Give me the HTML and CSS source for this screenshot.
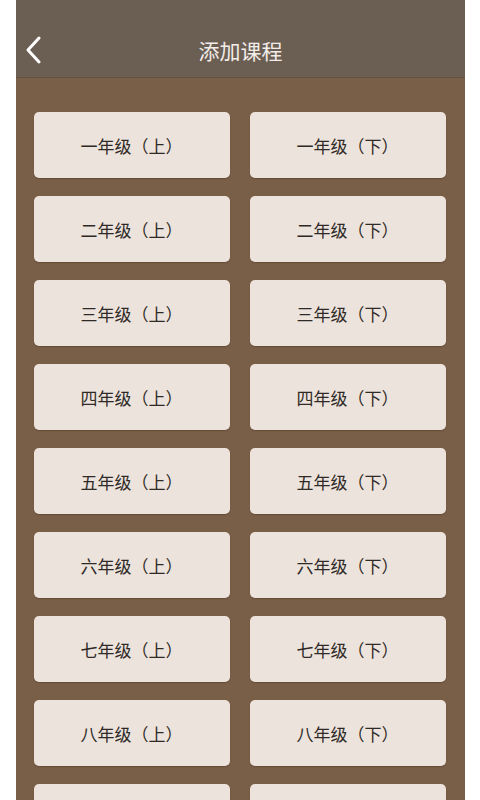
FILE: index.html
```html
<!DOCTYPE html>
<html lang="zh">
<head>
<meta charset="utf-8">
<title>添加课程</title>
<link rel="stylesheet" href="styles.css">
</head>
<body>
<div class="app">
  <header class="topbar">
    <svg class="back" width="20" height="28" viewBox="0 0 20 28"><path d="M15 2 L4 14 L15 26" fill="none" stroke="#fff" stroke-width="3" stroke-linecap="round" stroke-linejoin="round"/></svg>
    <h1 class="title">添加课程</h1>
  </header>
  <main class="grid">
    <div class="card">一年级（上）</div><div class="card">一年级（下）</div>
    <div class="card">二年级（上）</div><div class="card">二年级（下）</div>
    <div class="card">三年级（上）</div><div class="card">三年级（下）</div>
    <div class="card">四年级（上）</div><div class="card">四年级（下）</div>
    <div class="card">五年级（上）</div><div class="card">五年级（下）</div>
    <div class="card">六年级（上）</div><div class="card">六年级（下）</div>
    <div class="card">七年级（上）</div><div class="card">七年级（下）</div>
    <div class="card">八年级（上）</div><div class="card">八年级（下）</div>
    <div class="card"></div><div class="card"></div>
  </main>
</div>
</body>
</html>
```
FILE: styles.css
```css
html, body {
  margin: 0;
  padding: 0;
  height: 800px;
  overflow: hidden;
  background: #ffffff;
  font-family: "Noto Sans CJK SC", "Noto Sans", sans-serif;
}
.app {
  margin-left: 16px;
  width: 449px;
  height: 800px;
  background: #7a5f48;
  overflow: hidden;
}
.topbar {
  position: relative;
  height: 77px;
  box-sizing: border-box;
  padding-top: 22px;
  background: #6b5e53;
  display: flex;
  align-items: center;
  justify-content: center;
  box-shadow: 0 1px 0 #66523f;
}
.back {
  position: absolute;
  left: 8px;
  top: 36px;
}
.title {
  margin: 0;
  font-size: 21px;
  font-weight: 400;
  color: #f2ede8;
}
.grid {
  display: grid;
  grid-template-columns: 196px 196px;
  column-gap: 20px;
  row-gap: 18px;
  padding: 35px 0 0 17.5px;
}
.card {
  height: 66px;
  background: #ece3dc;
  border-radius: 5px;
  box-shadow: 0 1px 1px rgba(60, 40, 25, 0.35);
  display: flex;
  align-items: center;
  justify-content: center;
  font-size: 17px;
  color: #2f2a26;
}
```
